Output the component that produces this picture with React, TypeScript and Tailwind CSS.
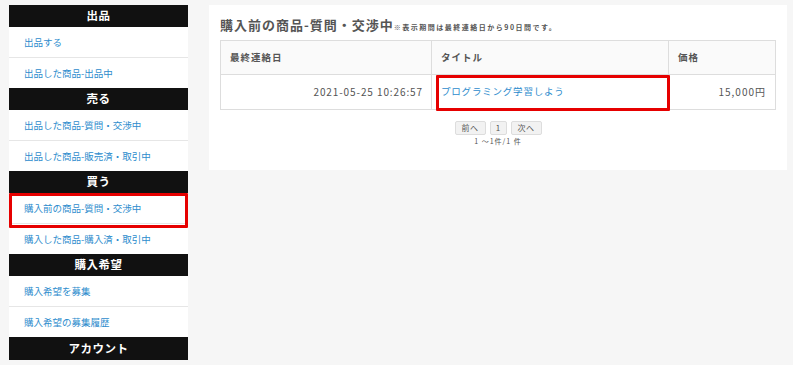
const font = { fontFamily: '"Noto Sans CJK JP", "Noto Sans", sans-serif' };

type Group = { title: string; items: string[] };

const groups: Group[] = [
  { title: "出品", items: ["出品する", "出品した商品-出品中"] },
  { title: "売る", items: ["出品した商品-質問・交渉中", "出品した商品-販売済・取引中"] },
  { title: "買う", items: ["購入前の商品-質問・交渉中", "購入した商品-購入済・取引中"] },
  { title: "購入希望", items: ["購入希望を募集", "購入希望の募集履歴"] },
];

function Sidebar() {
  return (
    <div className="w-[179px] ml-[9px] mt-[5px] bg-white shrink-0">
      {groups.map((g) => (
        <div key={g.title}>
          <div className="h-[22px] bg-[#111] text-white text-[11.5px] font-bold flex items-center justify-center tracking-[0.5px]">
            {g.title}
          </div>
          {g.items.map((item, i) => (
            <div
              key={item}
              className={`relative h-[30px] flex items-center pl-[15px] text-[9.5px] text-[#2d8ccd] ${
                i === 0 ? "border-b border-[#e6e6e6] h-[31px]" : ""
              }`}
            >
              {item}
              {item === "購入前の商品-質問・交渉中" && (
                <div className="absolute left-0 top-0 w-[179px] h-[35px] border-[3px] border-[#e60000] rounded-[1px]" />
              )}
            </div>
          ))}
        </div>
      ))}
      <div className="h-[23px] bg-[#111] text-white text-[11.5px] font-bold flex items-center justify-center tracking-[0.5px]">
        アカウント
      </div>
    </div>
  );
}

export default function App() {
  return (
    <div className="w-[793px] h-[365px] bg-[#f6f6f6] flex items-start overflow-hidden" style={font}>
      <Sidebar />
      <div className="ml-[21px] mt-[5px] w-[578px] h-[165px] bg-white px-[11px] pt-[10px]">
        <div className="flex items-baseline text-[#555] font-bold">
          <span className="text-[13px] tracking-[1px]">購入前の商品-質問・交渉中</span>
          <span className="text-[7px] tracking-[1.5px]">※表示期間は最終連絡日から90日間です。</span>
        </div>
        <table className="mt-[5px] w-[556px] border-collapse text-[#555]">
          <thead>
            <tr className="h-[34px] bg-[#fafafa]">
              <th className="w-[211px] border border-[#ddd] text-left pl-[9px] text-[9.5px] font-bold tracking-[1px]">
                最終連絡日
              </th>
              <th className="w-[237px] border border-[#ddd] text-left pl-[9px] text-[9.5px] font-bold tracking-[1px]">
                タイトル
              </th>
              <th className="border border-[#ddd] text-left pl-[9px] text-[9.5px] font-bold tracking-[1px]">
                価格
              </th>
            </tr>
          </thead>
          <tbody>
            <tr className="h-[35px]">
              <td className="border border-[#ddd] text-right pr-[8px] text-[10px] tracking-[0.9px]">
                2021-05-25 10:26:57
              </td>
              <td className="relative border border-[#ddd] pl-[9px] text-[9.5px] text-[#2d8ccd] tracking-[0.8px]">
                プログラミング学習しよう
                <div className="absolute left-[4px] top-0 w-[234px] h-[36px] border-[3px] border-[#e60000] rounded-[1px]" />
              </td>
              <td className="border border-[#ddd] text-right pr-[9px] text-[10px] tracking-[1px]">
                15,000円
              </td>
            </tr>
          </tbody>
        </table>
        <div className="mt-[11px] flex justify-center gap-[4px] text-[8px] text-[#555]">
          <span className="w-[31px] h-[14px] flex items-center justify-center bg-[#f2f2f2] border border-[#ddd] rounded-[2px] tracking-[0.5px]">
            前へ
          </span>
          <span className="w-[17px] h-[14px] flex items-center justify-center bg-[#f2f2f2] border border-[#ddd] rounded-[2px]">
            1
          </span>
          <span className="w-[31px] h-[14px] flex items-center justify-center bg-[#f2f2f2] border border-[#ddd] rounded-[2px] tracking-[0.5px]">
            次へ
          </span>
        </div>
        <div className="mt-[1px] text-center text-[7px] text-[#555] tracking-[1px]">1 ～1件/1 件</div>
      </div>
    </div>
  );
}
